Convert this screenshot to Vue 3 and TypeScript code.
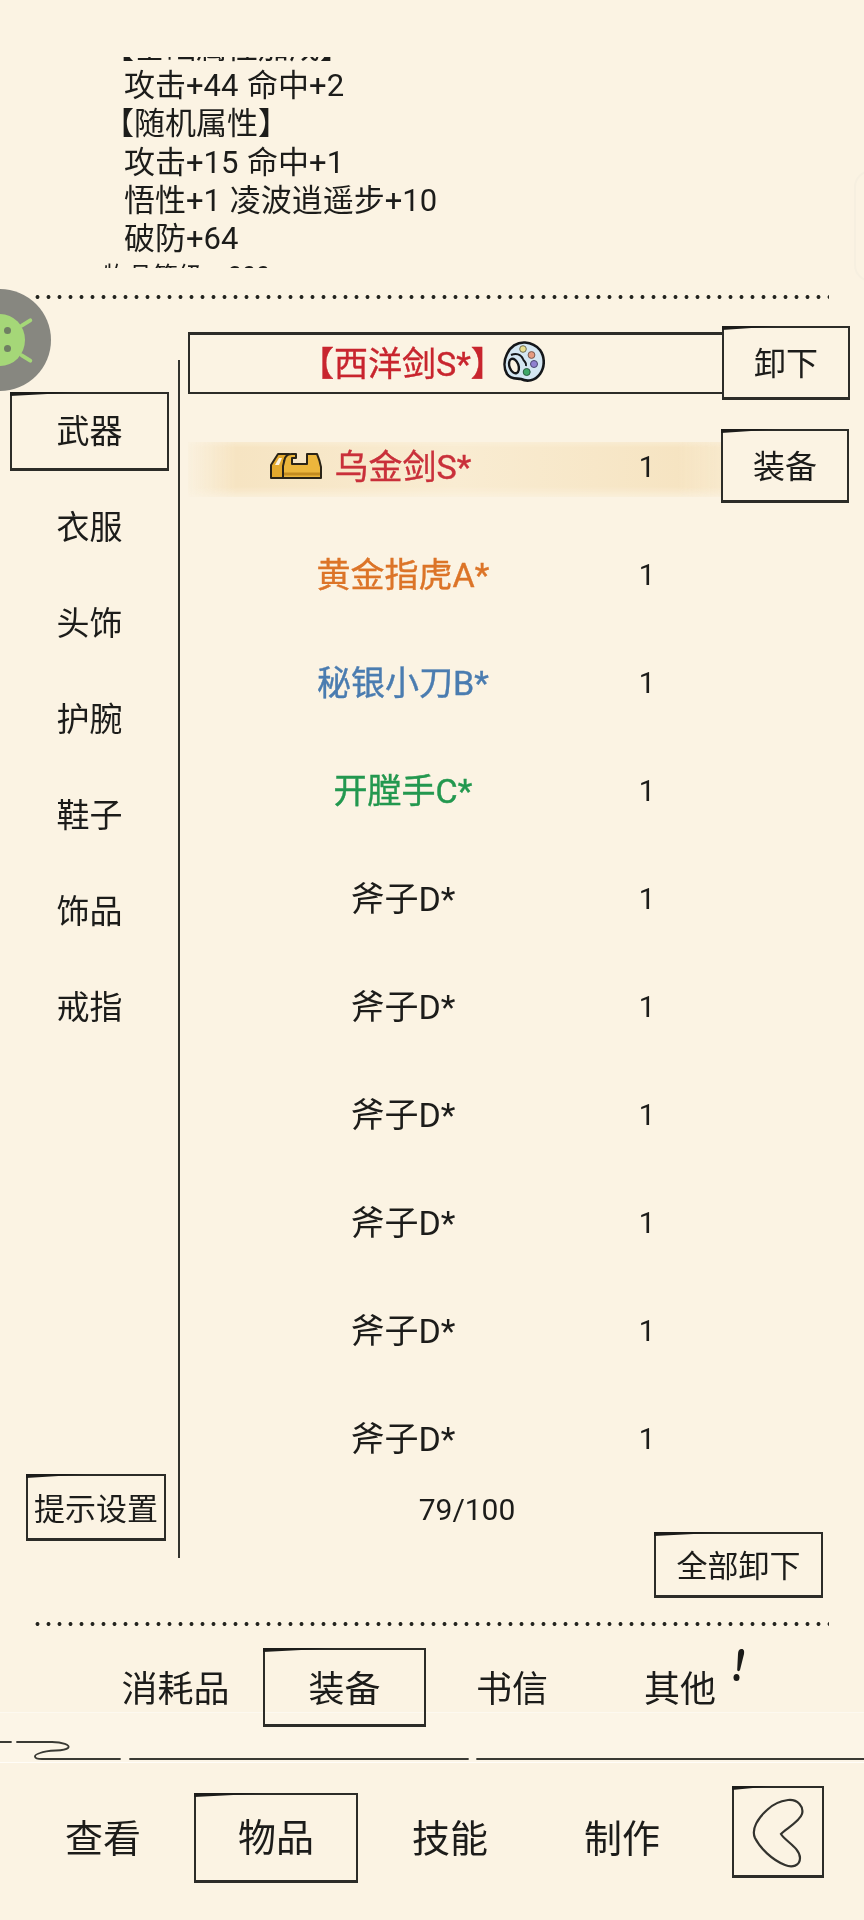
<script setup lang="ts">
interface Item { name: string; color: string; count: number; tinted?: boolean; selected?: boolean }

const detailLines: { text: string; indent?: boolean; small?: boolean }[] = [
  { text: '【基础属性加成】' },
  { text: '攻击+44 命中+2', indent: true },
  { text: '【随机属性】' },
  { text: '攻击+15 命中+1', indent: true },
  { text: '悟性+1 凌波逍遥步+10', indent: true },
  { text: '破防+64', indent: true },
  { text: '物品等级：300', small: true },
]
const categories: string[] = ['武器', '衣服', '头饰', '护腕', '鞋子', '饰品', '戒指']
const items: Item[] = [
  { name: '乌金剑S*', color: '#c9303a', count: 1, tinted: true, selected: true },
  { name: '黄金指虎A*', color: '#dc7428', count: 1, tinted: true },
  { name: '秘银小刀B*', color: '#4a7cb0', count: 1, tinted: true },
  { name: '开膛手C*', color: '#23984f', count: 1, tinted: true },
  { name: '斧子D*', color: '#1c1c1a', count: 1 },
  { name: '斧子D*', color: '#1c1c1a', count: 1 },
  { name: '斧子D*', color: '#1c1c1a', count: 1 },
  { name: '斧子D*', color: '#1c1c1a', count: 1 },
  { name: '斧子D*', color: '#1c1c1a', count: 1 },
  { name: '斧子D*', color: '#1c1c1a', count: 1 },
]
const tabs: { label: string; active?: boolean }[] = [
  { label: '消耗品' }, { label: '装备', active: true }, { label: '书信' }, { label: '其他' },
]
const navs: { label: string; active?: boolean }[] = [
  { label: '查看' }, { label: '物品', active: true }, { label: '技能' }, { label: '制作' },
]
</script>

<template>
  <div class="page">
    <div class="band"></div>
    <div class="handle"></div>
    <div class="float-ball">
      <div class="bot">
        <i class="eye eye-a"></i><i class="eye eye-b"></i>
        <i class="ant ant-a"></i><i class="ant ant-b"></i>
      </div>
    </div>

    <section class="detail">
      <div class="detail-clip">
        <div v-for="line in detailLines" :key="line.text" class="detail-line" :class="{ indent: line.indent, small: line.small }">{{ line.text }}</div>
      </div>
    </section>
    <div class="dots"></div>

    <main class="main">
      <aside class="side">
        <div v-for="(c, i) in categories" :key="c" class="cat" :class="{ sketch: i === 0 }">{{ c }}</div>
        <button class="hint sketch">提示设置</button>
      </aside>

      <div class="content">
        <div class="equipped-row">
          <div class="equipped">
            <span class="equipped-name">【西洋剑S*】</span>
            <svg class="palette" viewBox="0 0 42 42" width="42" height="42" aria-hidden="true">
              <path d="M22 1.500C14 1 7 6 4 13C1 19 0.500 27 4 33C8 39 14 37 18 38C24 41 32 40 37 33C42 26 42 16 37 9C33 4 28 2 22 1.500Z" fill="#d4e6f2" stroke="#15171a" stroke-width="2.600"/>
              <path d="M8 14C13 12 18 13 20 18C21 21 24 21 23 25" fill="none" stroke="#15171a" stroke-width="2"/>
              <ellipse cx="11" cy="25" rx="4.500" ry="7.500" transform="rotate(-20 11 25)" fill="#fbf3e3" stroke="#15171a" stroke-width="2.400"/>
              <circle cx="20" cy="8" r="3.300" fill="#eadf8c" stroke="#6c6a50" stroke-width="1"/>
              <circle cx="28.500" cy="14" r="3.400" fill="#e69a80" stroke="#7a5a50" stroke-width="1"/>
              <circle cx="31" cy="23" r="3.500" fill="#8f7fd0" stroke="#4a4670" stroke-width="1"/>
              <circle cx="23.700" cy="31" r="3.500" fill="#3fa868" stroke="#2a5a40" stroke-width="1"/>
            </svg>
          </div>
          <button class="side-btn sketch">卸下</button>
        </div>

        <div v-for="(item, i) in items" :key="i" class="row">
          <div class="row-main" :class="{ selected: item.selected }">
            <div class="row-name" :class="{ tinted: item.tinted }" :style="{ color: item.color }">
              <svg v-if="item.selected" class="gold" viewBox="0 0 52 26" width="52" height="26" aria-hidden="true">
                <path d="M1 25V12L8 1H19L14 8V25Z" fill="#e3a92e" stroke="#2a2418" stroke-width="2" stroke-linejoin="round"/>
                <path d="M5 12L9 5H12L9 12Z" fill="#fbf3e3"/>
                <path d="M13 25V13L15 5Q17 1 22 1H26V5H22V11H37V1H47Q50 8 51 14V25Z" fill="#ecb63c" stroke="#2a2418" stroke-width="2" stroke-linejoin="round"/>
                <path d="M14 21H50" stroke="#c48c20" stroke-width="3"/>
              </svg>
              {{ item.name }}
            </div>
            <div class="row-count">{{ item.count }}</div>
          </div>
          <button v-if="item.selected" class="side-btn sketch">装备</button>
        </div>

        <div class="capacity">79/100</div>
        <button class="unequip-all sketch">全部卸下</button>
      </div>
    </main>
    <div class="dots"></div>

    <nav class="tabs">
      <div v-for="t in tabs" :key="t.label" class="tab" :class="{ sketch: t.active }">{{ t.label }}</div>
      <svg class="bang" viewBox="0 0 14 34" width="14" height="34" aria-hidden="true">
        <path d="M9 1C12 0.500 12.500 3 12 6L8 22C7.500 23.500 5.500 23.500 5.200 22L6 6C6.200 3 7 1.300 9 1Z" fill="#1b1b19"/>
        <ellipse cx="4.500" cy="29.500" rx="3" ry="3.500" fill="#1b1b19"/>
      </svg>
    </nav>

    <svg class="swirl" viewBox="0 0 864 22" width="864" height="22" aria-hidden="true">
      <path d="M0 3H11M17 3H52C62 3 71 6 68 9C64 13 50 10 40 14C33 16 33 20 42 20H120M130 20H468M477 20H864" fill="none" stroke="#3a3a34" stroke-width="1.800" stroke-linecap="round"/>
    </svg>

    <nav class="nav">
      <div v-for="n in navs" :key="n.label" class="nav-item" :class="{ sketch: n.active }">{{ n.label }}</div>
      <button class="back sketch">
        <svg viewBox="0 0 60 72" width="60" height="72" aria-hidden="true">
          <path d="M40 4C50 3 56 11 54 18C52 25 38 33 33 38C37 45 52 52 52 62C52 70 44 72 37 69C24 64 12 52 7 42C3 33 10 22 19 14C25 8 32 5 40 4Z" fill="none" stroke="#33332e" stroke-width="2.200"/>
        </svg>
      </button>
    </nav>
  </div>
</template>

<style>
html, body { margin: 0; background: #fbf3e3; }
</style>

<style scoped>
.page {
  position: relative;
  width: 864px;
  height: 1920px;
  overflow: hidden;
  background: #fbf3e3;
  color: #1c1c1a;
  font-family: Roboto, "Noto Sans CJK SC", "Noto Sans", sans-serif;
  filter: blur(0.35px);
}
button { font: inherit; color: inherit; background: transparent; padding: 0; }

.band {
  position: absolute;
  left: 0;
  right: 0;
  top: 1712px;
  height: 49px;
  background: #fcf5e7;
  border-top: 1px solid #fdf9f0;
  border-bottom: 1px solid #fffdf8;
}
.sketch {
  position: relative;
  box-sizing: border-box;
  border: 2px solid #2c2c28;
  border-bottom-width: 3px;
}
.sketch::before {
  content: "";
  position: absolute;
  left: -2px;
  top: -2px;
  width: 48%;
  height: 4px;
  background: linear-gradient(90deg, #1c1c1a 60%, rgba(28, 28, 26, 0.2));
  clip-path: polygon(0 0, 100% 0, 0 100%);
}

.handle {
  position: absolute;
  right: -24px;
  top: 170px;
  width: 30px;
  height: 108px;
  border: 2px solid #f6efe0;
  border-radius: 18px;
}
.float-ball {
  position: absolute;
  left: -51px;
  top: 289px;
  width: 102px;
  height: 102px;
  border-radius: 50%;
  background: #878780;
  z-index: 2;
}
.bot {
  position: absolute;
  left: 0;
  top: 25px;
  width: 76px;
  height: 52px;
}
.bot::before {
  content: "";
  position: absolute;
  left: 26px;
  top: 0;
  width: 50px;
  height: 52px;
  border-radius: 50%;
  background: #a5d778;
}
.eye {
  position: absolute;
  left: 55px;
  width: 7px;
  height: 7px;
  border-radius: 50%;
  background: #6f7f63;
  z-index: 1;
}
.eye-a { top: 13px; }
.eye-b { top: 31px; }
.ant {
  position: absolute;
  left: 70px;
  width: 14px;
  height: 4px;
  border-radius: 2px;
  background: #a5d778;
}
.ant-a { top: 7px; transform: rotate(-32deg); }
.ant-b { top: 42px; transform: rotate(32deg); }

.detail {
  box-sizing: border-box;
  height: 294px;
  padding-top: 57px;
}
.detail-clip {
  height: 211px;
  overflow: hidden;
  padding-left: 103px;
}
.detail-line {
  height: 38.2px;
  line-height: 38.2px;
  font-size: 31px;
  word-spacing: 1px;
  white-space: nowrap;
}
.detail-line:first-child { margin-top: -28px; }
.detail-line.indent { padding-left: 21px; }
.detail-line.small { font-size: 25px; }

.dots {
  height: 6px;
  margin: 0 35px;
  background: radial-gradient(circle at 2.500px 3px, #24241f 1.600px, rgba(36, 36, 31, 0) 2.300px) repeat-x;
  background-size: 11px 6px;
}

.main {
  display: flex;
  height: 1321px;
}
.side {
  box-sizing: border-box;
  display: flex;
  flex-direction: column;
  align-items: flex-start;
  width: 180px;
  height: 1198px;
  margin-top: 60px;
  padding: 32px 0 17px 10px;
  border-right: 2px solid #33332e;
}
.cat {
  box-sizing: border-box;
  width: 159px;
  height: 79px;
  margin-bottom: 17px;
  padding-bottom: 5px;
  display: flex;
  align-items: center;
  justify-content: center;
  font-size: 33px;
}
.hint {
  width: 140px;
  height: 67px;
  margin: auto 0 0 16px;
  padding-bottom: 2px;
  font-size: 31px;
  white-space: nowrap;
}
.content {
  flex: 1;
  margin-left: 8px;
  padding-top: 26px;
}
.equipped-row {
  display: flex;
  align-items: center;
  height: 74px;
  margin-bottom: 12px;
}
.equipped {
  box-sizing: border-box;
  display: flex;
  align-items: center;
  width: 534px;
  height: 62px;
  padding: 0 0 4px 110px;
  border: 2px solid #2c2c28;
  border-top-width: 3px;
  border-right: none;
}
.equipped-name {
  font-size: 34px;
  color: #c8252e;
  -webkit-text-stroke: 0.4px #c8252e;
  white-space: nowrap;
}
.palette { margin-left: -2px; }
.side-btn {
  flex: none;
  width: 128px;
  height: 74px;
  padding-bottom: 4px;
  font-size: 32px;
}
.row {
  display: flex;
  align-items: center;
  height: 108px;
}
.row-main {
  box-sizing: border-box;
  position: relative;
  display: flex;
  align-items: center;
  width: 533px;
  height: 54px;
  padding-top: 2px;
}
.row-main.selected::before {
  content: "";
  position: absolute;
  left: 0;
  right: 0;
  top: 3px;
  bottom: -4px;
  background: linear-gradient(90deg, rgba(244, 224, 184, 0.1), #f6e4c2 9%, #f9ecd2 50%, #f6e4c2 92%, rgba(246, 228, 194, 0.7));
  -webkit-mask-image: linear-gradient(180deg, rgba(0,0,0,0.6), #000 10%, #000 82%, rgba(0,0,0,0.3));
  mask-image: linear-gradient(180deg, rgba(0,0,0,0.6), #000 10%, #000 82%, rgba(0,0,0,0.3));
}
.row-name {
  position: relative;
  width: 430px;
  font-size: 34px;
  line-height: 54px;
  text-align: center;
  white-space: nowrap;
}
.row-name.tinted { -webkit-text-stroke: 0.4px currentColor; }
.gold {
  position: absolute;
  left: 82px;
  top: 13px;
}
.row-count {
  position: relative;
  width: 56px;
  margin-left: 1px;
  font-size: 29px;
  text-align: center;
}
.capacity {
  width: 558px;
  height: 36px;
  line-height: 36px;
  font-size: 30px;
  text-align: center;
}
.unequip-all {
  display: block;
  width: 169px;
  height: 66px;
  margin: 4px 0 0 466px;
  padding-bottom: 2px;
  font-size: 31px;
  white-space: nowrap;
}

.tabs {
  position: relative;
  display: grid;
  grid-template-columns: 175px 163px 172px 164px;
  align-items: center;
  height: 79px;
  margin-top: 21px;
  padding-left: 88px;
  font-size: 36px;
}
.tab {
  box-sizing: border-box;
  height: 79px;
  padding-bottom: 3px;
  display: flex;
  align-items: center;
  justify-content: center;
}
.bang {
  position: absolute;
  left: 732px;
  top: 0;
}
.swirl {
  position: relative;
  display: block;
  margin-top: 12px;
}
.nav {
  display: flex;
  align-items: flex-start;
  margin-top: 26px;
  padding-left: 12px;
  font-size: 38px;
}
.nav-item {
  box-sizing: border-box;
  flex: none;
  height: 90px;
  width: 182px;
  margin-top: 6px;
  padding-bottom: 6px;
  display: flex;
  align-items: center;
  justify-content: center;
}
.nav-item.sketch { width: 164px; }
.nav-item:nth-child(3) { width: 184px; }
.nav-item:nth-child(4) { width: 160px; }
.back {
  flex: none;
  display: flex;
  align-items: center;
  justify-content: center;
  width: 92px;
  height: 92px;
  margin: -1px 0 0 30px;
}
</style>
